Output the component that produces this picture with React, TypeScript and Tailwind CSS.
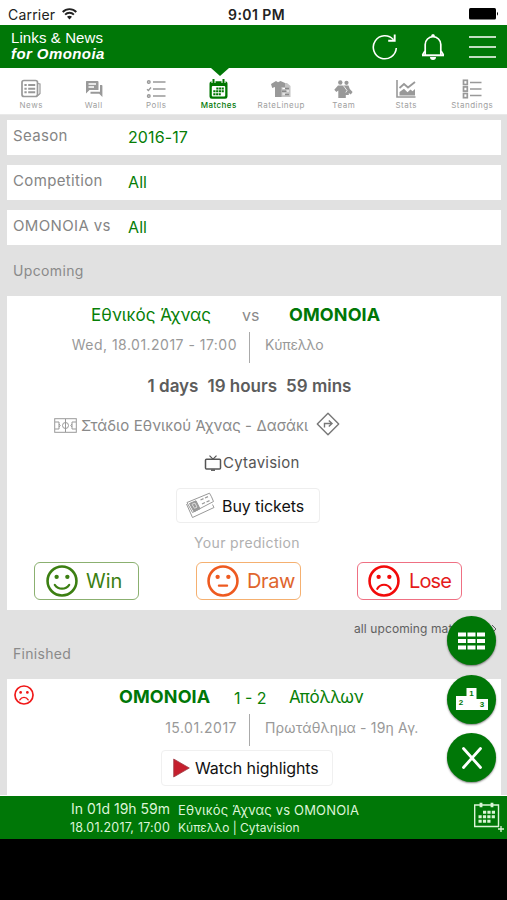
import type { ReactNode } from "react";

function NewsIcon() {
  return (
    <svg width="20" height="20" viewBox="0 0 20 20" fill="none" stroke="#999" strokeWidth="1.7">
      <rect x="1" y="1.5" width="15.5" height="16" rx="2" />
      <path d="M17 4.5l2 .5v9.5l-2 2" strokeWidth="1.2" />
      <path d="M7.2 6h7M7.2 9.7h7M7.2 13.3h7" strokeWidth="2" />
      <path d="M3.4 6h2.3M3.4 9.7h2.3M3.4 13.3h2.3" strokeWidth="2" />
    </svg>
  );
}

function WallIcon() {
  return (
    <svg width="18" height="18" viewBox="0 0 18 18" fill="#999">
      <path d="M1.5 1h11a1 1 0 0 1 1 1v8h-9L1 13.5V1.6z" />
      <path d="M3.5 4h7.5M3.5 7h5.5" stroke="#fff" strokeWidth="1.3" />
      <path d="M15 5h1.6a.8.8 0 0 1 .8.8V17l-3.2-3.3H5.5v-1.9H15z" />
    </svg>
  );
}

function PollsIcon() {
  return (
    <svg width="20" height="20" viewBox="0 0 20 20" fill="none" stroke="#999">
      <path d="M7 3h12.5M7 10h12.5M7 17h12.5" strokeWidth="1.7" />
      <circle cx="2.8" cy="3" r="1.3" strokeWidth="1.4" />
      <path d="M1 10.2l1.4 1.3L5 8.5" strokeWidth="1.3" />
      <circle cx="2.8" cy="17" r="1.3" strokeWidth="1.4" />
    </svg>
  );
}

function MatchesIcon() {
  return (
    <svg width="19" height="20" viewBox="0 0 19 20">
      <path d="M3 2.2h13a2.5 2.5 0 0 1 2.5 2.5v12.8a2.3 2.3 0 0 1-2.3 2.3H2.8a2.3 2.3 0 0 1-2.3-2.3V4.7A2.5 2.5 0 0 1 3 2.2z" fill="#007700" />
      <path d="M4.5 0v4M14.5 0v4" stroke="#fff" strokeWidth="4" />
      <path d="M4.5 0v4M14.5 0v4" stroke="#007700" strokeWidth="2" />
      <rect x="2.8" y="7" width="13.4" height="10.5" rx="1" fill="#fff" />
      <path d="M7.3 9.5h7.5M4.3 12.3h10.5M4.3 15.2h7.5" stroke="#007700" strokeWidth="2" strokeDasharray="2.2 .6" />
    </svg>
  );
}

function RateIcon() {
  return (
    <svg width="20" height="18" viewBox="0 0 20 18" fill="#999">
      <path d="M10 3h6l3.5 3v11H10z" fill="#c4c4c4" />
      <path d="M5 1l2 1.2L9.5 1 14 3v4h-3.500v10H4V7L1.200 8 0 4z" />
      <path d="M11.500 8.500h3M15 11h3M11.500 14h3" stroke="#fff" strokeWidth="1.200" />
      <path d="M14 8.500h4M11 11.300h4.500M14 14.500h4" stroke="#888" strokeWidth="1.400" />
    </svg>
  );
}

function TeamIcon() {
  return (
    <svg width="19" height="18" viewBox="0 0 19 18" fill="#999">
      <circle cx="6.300" cy="2.500" r="2.200" />
      <circle cx="12.500" cy="2.800" r="2.100" />
      <path d="M4 5.500h10.500l1.300 3.500 2.800 3-1.800 2.500-2-1.500v2h-3v3h-7.500v-7.500l-2 1.500L.3 9.800z" />
      <path d="M9.300 5.500l3.700 5-1.200 2" fill="none" stroke="#fff" strokeWidth=".8" />
    </svg>
  );
}

function StatsIcon() {
  return (
    <svg width="20" height="18" viewBox="0 0 20 18" fill="none" stroke="#999">
      <path d="M1 0v17h18.500" strokeWidth="1.600" />
      <path d="M3.500 8L8 4l4 3.500L19 2" strokeWidth="1.800" />
      <path d="M3.500 15.500v-3.500L8 8.800l3.500 3.400 3-2.700 2 1.800L19 9v6.500z" fill="#999" stroke="none" />
    </svg>
  );
}

function StandingsIcon() {
  return (
    <svg width="20" height="20" viewBox="0 0 20 20" fill="none" stroke="#999">
      <path d="M8 3.500h11.500M8 10h11.500M8 16.500h11.500" strokeWidth="1.600" />
      <rect x="1.500" y="1.300" width="3.800" height="4.200" strokeWidth="1.700" />
      <rect x="1.500" y="7.900" width="3.800" height="4.200" strokeWidth="1.700" />
      <rect x="1.500" y="14.500" width="3.800" height="4.200" strokeWidth="1.700" />
    </svg>
  );
}

const tabs: { label: string; icon: ReactNode; active?: boolean }[] = [
  { label: "News", icon: <NewsIcon /> },
  { label: "Wall", icon: <WallIcon /> },
  { label: "Polls", icon: <PollsIcon /> },
  { label: "Matches", icon: <MatchesIcon />, active: true },
  { label: "RateLineup", icon: <RateIcon /> },
  { label: "Team", icon: <TeamIcon /> },
  { label: "Stats", icon: <StatsIcon /> },
  { label: "Standings", icon: <StandingsIcon /> },
];

function Face({ mood, size, color, stroke = 2.5 }: { mood: "win" | "draw" | "lose"; size: number; color: string; stroke?: number }) {
  return (
    <svg width={size} height={size} viewBox="0 0 31 31" fill="none" stroke={color} strokeWidth={stroke} strokeLinecap="round" className="shrink-0">
      <circle cx="15.500" cy="15.500" r="14" />
      <circle cx="10.300" cy="11.500" r="2.100" fill={color} stroke="none" />
      <circle cx="20.700" cy="11.500" r="2.100" fill={color} stroke="none" />
      {mood === "win" && <path d="M8.500 19.200c3.500 5 10.500 5 14 0" strokeWidth="2.100" />}
      {mood === "draw" && <path d="M11.500 20h8" strokeWidth="2.100" />}
      {mood === "lose" && <path d="M9 23c3-5.200 10-5.200 13 0" strokeWidth="2.100" />}
    </svg>
  );
}

function FilterRow({ label, value }: { label: string; value: string }) {
  return (
    <div className="flex h-[35px] bg-white pl-1.5 text-[15px] tracking-[0.35px]">
      <span className="w-[115px] pt-[5px] leading-[22px] text-[#858585]">{label}</span>
      <span className="pt-[6px] text-[16px] leading-[22px] tracking-[0.1px] text-[#067d06]">{value}</span>
    </div>
  );
}

export default function App() {
  return (
    <div className="relative flex h-[900px] w-[507px] flex-col overflow-hidden whitespace-nowrap bg-[#e1e1e1] font-['Inter','Noto_Sans',sans-serif]">
      <div className="flex h-[25px] shrink-0 items-center bg-white px-2 pt-[3px] text-[14px] text-[#222]">
        <div className="flex w-[220px] items-center gap-[7px]">
          <span className="tracking-[0.2px]">Carrier</span>
          <svg width="15" height="12" viewBox="0 0 15 12" fill="none" stroke="#222" strokeWidth="1.900">
            <path d="M.7 4c3.700-3.800 9.900-3.800 13.600 0M3.100 6.600c2.400-2.400 6.400-2.400 8.800 0" />
            <path d="M5 8.800c1.400-1.300 3.600-1.300 5 0L7.500 11.500z" fill="#222" stroke="none" />
          </svg>
        </div>
        <span className="font-semibold tracking-[0.45px]">9:01 PM</span>
        <div className="flex flex-1 justify-end">
          <svg width="30" height="12" viewBox="0 0 30 12">
            <rect x="0" y="0" width="27" height="11.500" rx="1.500" />
            <path d="M28 3.800q2 2 0 4z" />
          </svg>
        </div>
      </div>

      <header className="flex h-[43px] shrink-0 items-center bg-[#007707] text-white">
        <div className="flex-1 self-start pl-[11px] pt-[5px] font-['Liberation_Sans',sans-serif]">
          <div className="text-[15px] leading-[16px] tracking-[0.1px]">Links &amp; News</div>
          <div className="text-[15px] font-bold italic leading-[16px] tracking-[0.42px]">for Omonoia</div>
        </div>
        <svg className="mr-[23px]" width="26" height="28" viewBox="0 0 26 28" fill="none" stroke="#fff" strokeWidth="1.600">
          <path d="M24.300 15A11.500 11.500 0 1 1 21.500 6.700" />
          <path d="M22.700 1.500v6.300h-6.500" strokeWidth="1.900" />
        </svg>
        <svg className="mr-[24px]" width="24" height="28" viewBox="0 0 24 28" fill="none" stroke="#fff" strokeWidth="1.700">
          <path d="M4.200 22V11.500a7.800 7.800 0 0 1 15.600 0V22" />
          <path d="M1 22.300h22" strokeWidth="2" />
          <path d="M4 18l-2.500 4M20 18l2.500 4" />
          <path d="M10 3.500a2 2.500 0 0 1 4 0z" fill="#fff" stroke="none" />
          <path d="M9 24h6a3 3 0 0 1-6 0z" fill="#fff" stroke="none" />
        </svg>
        <svg className="mr-[11px]" width="27" height="24" viewBox="0 0 27 24" stroke="#fff" strokeWidth="1.700">
          <path d="M0 2h27M0 12h27M0 22h27" />
        </svg>
      </header>

      <nav className="flex h-[47px] shrink-0 border-b border-[#e9e9e9] bg-white">
        {tabs.map((t) => (
          <div
            key={t.label}
            className={
              t.active
                ? "relative flex w-[62.5px] shrink-0 flex-col items-center pt-[11px] text-[#007707]"
                : "flex w-[62.5px] shrink-0 flex-col items-center pt-[11px] text-[#a0a0a0] last:w-[69.5px]"
            }
          >
            {t.active && (
              <svg className="absolute left-[23px] top-0" width="18" height="8" viewBox="0 0 18 8" fill="#007707">
                <path d="M0 0h18L9 8z" />
              </svg>
            )}
            <div className="flex h-5 items-center">{t.icon}</div>
            <span className={t.active ? "mt-px text-[8px] font-medium leading-[11px] tracking-[0.45px]" : "mt-px text-[8px] leading-[11px] tracking-[0.5px]"}>
              {t.label}
            </span>
          </div>
        ))}
      </nav>

      <div className="flex shrink-0 flex-col gap-2.5 pl-[7px] pr-1.5 pt-[5px]">
        <FilterRow label="Season" value="2016-17" />
        <FilterRow label="Competition" value="All" />
        <FilterRow label="OMONOIA vs" value="All" />
      </div>

      <div className="h-[51px] shrink-0 pl-[13px] pt-[17px] text-[14px] leading-[18px] tracking-[0.35px] text-[#8a8a8a]">Upcoming</div>

      <section className="ml-[7px] mr-1.5 flex h-[314px] shrink-0 flex-col bg-white">
        <div className="flex h-[36px] items-center text-[17px]">
          <span className="w-[204px] pt-[3px] text-right tracking-[0px] text-[#078007]">Εθνικός Άχνας</span>
          <span className="w-[78px] pl-[31px] pt-[2px] text-[16px] text-[#8a8a8a]">vs</span>
          <span className="text-[18px] font-bold tracking-[0.1px] text-[#007707]">OMONOIA</span>
        </div>
        <div className="flex h-[32px] items-start text-[14px] leading-[26px] text-[#999]">
          <span className="w-[230px] text-right tracking-[0.48px]">Wed, 18.01.2017 - 17:00</span>
          <span className="ml-[12px] h-[31px] w-px bg-[#aaa]" />
          <span className="ml-[15px] text-[14px] tracking-[-0.2px]">Κύπελλο</span>
        </div>
        <div className="flex h-[44px] items-center justify-center gap-[9px] pr-[9px] pt-[2px] text-[17px] font-semibold text-[#5c5c5c]">
          <span>1 days</span>
          <span>19 hours</span>
          <span>59 mins</span>
        </div>
        <div className="flex h-[34px] items-center pl-[47px] text-[15px] text-[#8a8a8a]">
          <svg width="23" height="15" viewBox="0 0 23 15" fill="none" stroke="#999">
            <rect x=".7" y=".7" width="21.600" height="13.600" />
            <path d="M11.500 1v13M1 4h4v7H1M22 4h-4v7h4M5 6q2.500 1.500 0 3M18 6q-2.500 1.500 0 3" />
            <circle cx="11.500" cy="7.500" r="3" />
          </svg>
          <span className="ml-[4px] pt-[2px] tracking-[0.08px]">Στάδιο Εθνικού Άχνας - Δασάκι</span>
          <svg className="mb-[3px] ml-[8px]" width="24" height="24" viewBox="0 0 24 24" fill="none" stroke="#777" strokeWidth="1.400">
            <path d="M12 1.300L22.700 12 12 22.700 1.300 12z" strokeLinejoin="round" />
            <path d="M8.500 15.500v-4h6.500M12.800 8.600l3.200 2.900-3.200 2.900" />
          </svg>
        </div>
        <div className="flex h-[41px] items-center pl-[197px] text-[15px] text-[#555]">
          <svg width="18" height="16" viewBox="0 0 18 16" fill="none" stroke="#555" strokeWidth="1.500">
            <rect x="1.500" y="4.300" width="15" height="9.700" rx="1" />
            <path d="M5.500.7L9 4.200 12.500.7" strokeWidth="1.200" />
            <path d="M7 15.200h4" strokeWidth="1.400" />
          </svg>
          <span className="pl-px pt-[2px] tracking-[0.22px]">Cytavision</span>
        </div>
        <div className="ml-[169px] mt-[5px] flex h-[35px] w-[144px] items-center rounded-[4px] border border-[#eee] pl-[8px] text-[16px] text-[#111]">
          <svg width="31" height="29" viewBox="0 0 31 29" fill="none" stroke="#999" strokeWidth="1">
            <path d="M1.500 13l6 13.500L29 16.500l-1.500-3" />
            <path d="M2 11.500L24.500 2.200q2 3 4 8.300L7.500 21.500z" fill="#fff" />
            <path d="M4.500 12.500l6.500-2.700 4 8-6 3z" fill="#999" />
            <path d="M7 13.300l3-1.200 2 4-2.500 1.200z" stroke="#ddd" />
            <path d="M15.500 9l3-1.300M20 7l3-1.300M17 13l3-1.500M21.500 11l3-1.300" strokeWidth="1.300" />
          </svg>
          <span className="ml-[6px] tracking-[-0.08px]">Buy tickets</span>
        </div>
        <div className="flex h-[39px] items-center justify-center pr-[14px] text-[14px] tracking-[0.35px] text-[#b0b0b0]">Your prediction</div>
        <div className="flex items-center pl-[27px] text-[20px]">
          <div className="flex h-[38px] w-[105px] items-center rounded-[6px] border border-[#8bb070] pl-[11px] text-[#3c7f12]">
            <Face mood="win" size={32} color="#3c7f12" />
            <span className="ml-[8px] tracking-[0px]">Win</span>
          </div>
          <div className="ml-[57px] flex h-[38px] w-[105px] items-center rounded-[6px] border border-[#f5b070] pl-[10px] text-[#e0652d]">
            <Face mood="draw" size={32} color="#ee5a20" />
            <span className="ml-[8px] tracking-[-0.4px]">Draw</span>
          </div>
          <div className="ml-[56px] flex h-[38px] w-[105px] items-center rounded-[6px] border border-[#ef7083] pl-[10px] text-[#e51c1c]">
            <Face mood="lose" size={32} color="#f20a0a" />
            <span className="ml-[9px] tracking-[-0.9px]">Lose</span>
          </div>
        </div>
      </section>

      <div className="flex h-[33px] shrink-0 items-center pl-[354px] pt-[5px] text-[12px] tracking-[0.1px] text-[#606060]">
        <span className="w-[134px] overflow-hidden">all upcoming matches</span>
        <svg width="9" height="10" viewBox="0 0 9 10" fill="none" stroke="#606060">
          <path d="M0 1l4 4-4 4M4 1l4 4-4 4" />
        </svg>
      </div>
      <div className="h-[36px] shrink-0 pl-[13px] pt-[2px] text-[14px] leading-[18px] tracking-[0.3px] text-[#8a8a8a]">Finished</div>

      <section className="ml-[7px] mr-1.5 h-[116px] shrink-0 bg-white">
        <div className="flex h-[35px] items-center">
          <div className="ml-[7px] w-[20px] pb-[3px]">
            <Face mood="lose" size={20} color="#f01818" stroke={2.6} />
          </div>
          <span className="ml-[85px] w-[115px] text-[18px] font-bold tracking-[0.1px] text-[#007707]">OMONOIA</span>
          <span className="w-[55px] pt-[2px] text-[16px] text-[#078007]">1 - 2</span>
          <span className="pt-[2px] text-[17px] tracking-[-0.15px] text-[#078007]">Απόλλων</span>
        </div>
        <div className="flex h-[36px] items-start text-[14px] leading-[27px] text-[#999]">
          <span className="w-[230px] text-right tracking-[0.48px]">15.01.2017</span>
          <span className="ml-[12px] h-[32px] w-px bg-[#aaa]" />
          <span className="ml-[15px] tracking-[0.17px]">Πρωτάθλημα - 19η Αγ.</span>
        </div>
        <div className="ml-[154px] flex h-[36px] w-[172px] items-center rounded-[4px] border border-[#f0f0f0] pl-[11px] text-[16px] text-[#111]">
          <svg width="17" height="20" viewBox="0 0 17 20">
            <path d="M.7 1L16.300 10 .7 19z" fill="#c51f2d" stroke="#9f4049" strokeWidth=".8" />
          </svg>
          <span className="ml-[5px] tracking-[-0.1px]">Watch highlights</span>
        </div>
      </section>

      <footer className="flex h-[44px] shrink-0 border-t border-white bg-[#007707] text-[#dcf5d8]">
        <div className="w-[170px] pt-[4px] text-right leading-[18px]">
          <div className="text-[14px] tracking-[0px]">In 01d 19h 59m</div>
          <div className="pt-px text-[12.5px] tracking-[0.2px]">18.01.2017, 17:00</div>
        </div>
        <div className="flex-1 pl-[8px] pt-[5px] leading-[18px]">
          <div className="text-[13px] tracking-[0.17px]">Εθνικός Άχνας vs OMONOIA</div>
          <div className="text-[12px] tracking-[0px]">Κύπελλο | Cytavision</div>
        </div>
        <svg className="mr-[2px] mt-[6px]" width="32" height="32" viewBox="0 0 32 32" fill="none" stroke="#dcf5d8" strokeWidth="1.400">
          <path d="M26 24.500H1.700V3H25.500V25" />
          <path d="M8 .8v4.500M19 .8v4.500" strokeWidth="2.800" />
          <path d="M10 10.300h13M5.500 14.800h17.500M5.500 19.300h13" strokeWidth="3" strokeDasharray="3.200 1.200" />
          <path d="M28 24v6M25 27h6" strokeWidth="1.300" />
        </svg>
      </footer>
      <div className="flex-1 bg-black" />

      <div className="absolute left-[447px] top-[616px] flex flex-col gap-[9.500px]">
        <div className="flex h-[49px] w-[49px] items-center justify-center rounded-full bg-[#007707] shadow-[0_1px_2px_rgba(0,0,0,0.5)]">
          <svg width="27" height="18" viewBox="0 0 27 18" stroke="#fff" strokeWidth="4" strokeDasharray="8 1.500">
            <path d="M0 2.500h27M0 9h27M0 15.500h27" />
          </svg>
        </div>
        <div className="flex h-[49px] w-[49px] items-center justify-center rounded-full bg-[#007707] shadow-[0_1px_2px_rgba(0,0,0,0.5)]">
          <svg width="32" height="24" viewBox="0 0 32 24">
            <path d="M0 9h10.500V1h10v11H32v11H0z" fill="#fff" />
            <g fill="#007707" fontFamily="Liberation Sans, sans-serif" fontWeight="700" fontSize="8" textAnchor="middle">
              <text x="5" y="17.500">2</text>
              <text x="15.500" y="8.500">1</text>
              <text x="26" y="20">3</text>
            </g>
          </svg>
        </div>
        <div className="flex h-[49px] w-[49px] items-center justify-center rounded-full bg-[#007707] shadow-[0_1px_2px_rgba(0,0,0,0.5)]">
          <svg width="20" height="22" viewBox="0 0 20 22" stroke="#fff" strokeWidth="2.800" strokeLinecap="round">
            <path d="M1.500 1.500l17 19M18.500 1.500l-17 19" />
          </svg>
        </div>
      </div>
    </div>
  );
}
